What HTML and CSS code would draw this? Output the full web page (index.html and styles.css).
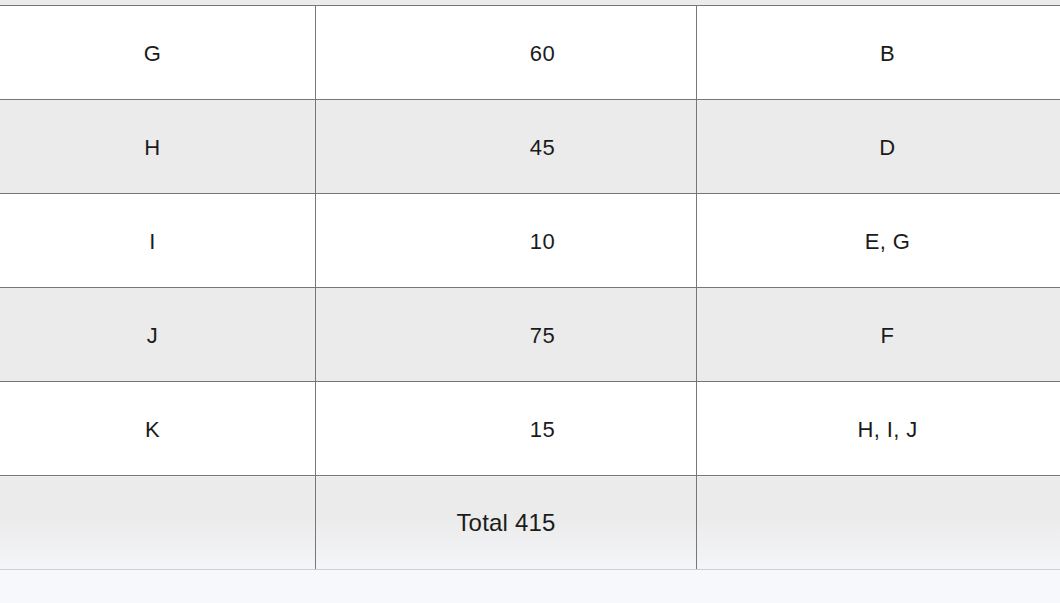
FILE: index.html
```html
<!DOCTYPE html>
<html>
<head>
<meta charset="utf-8">
<link rel="stylesheet" href="styles.css">
</head>
<body>
<div class="page">
  <div class="top"></div>
  <table class="grid">
    <colgroup><col class="c1"><col class="c2"><col class="c3"></colgroup>
    <tr class="row"><td>G</td><td class="num">60</td><td>B</td></tr>
    <tr class="row alt"><td>H</td><td class="num">45</td><td>D</td></tr>
    <tr class="row"><td>I</td><td class="num">10</td><td>E, G</td></tr>
    <tr class="row alt"><td>J</td><td class="num">75</td><td>F</td></tr>
    <tr class="row"><td>K</td><td class="num">15</td><td>H, I, J</td></tr>
    <tr class="row total"><td></td><td>Total 415</td><td></td></tr>
  </table>
</div>
</body>
</html>
```
FILE: styles.css
```css
html, body { margin: 0; padding: 0; }
body {
  background: #f7f8fb;
  font-family: "Liberation Sans", Arial, sans-serif;
  color: #1b1b1b;
  overflow: hidden;
  width: 1060px;
  height: 603px;
}
.page { width: 1060px; overflow: hidden; }
.top { height: 5px; background: #ebebeb; }
.grid {
  border-collapse: collapse;
  table-layout: fixed;
  width: 1089px;
  margin-left: -11px;
}
.c1 { width: 326px; }
.c2 { width: 381px; }
.c3 { width: 382px; }
.row td {
  height: 91px;
  padding: 2px 0 0 0;
  text-align: center;
  vertical-align: middle;
  font-size: 22px;
  letter-spacing: 0.4px;
  border: 1px solid #777;
  background: #fff;
}
.row.alt td { background: #ebebeb; }
.row td.num { padding-left: 73px; }
.row.total td {
  height: 93px;
  padding-top: 0;
  font-size: 24px;
  letter-spacing: 0.2px;
  background: linear-gradient(#ebebeb 0%, #ebebeb 45%, #f4f5f8 100%);
  border-bottom-color: #cfd0d3;
}
```
